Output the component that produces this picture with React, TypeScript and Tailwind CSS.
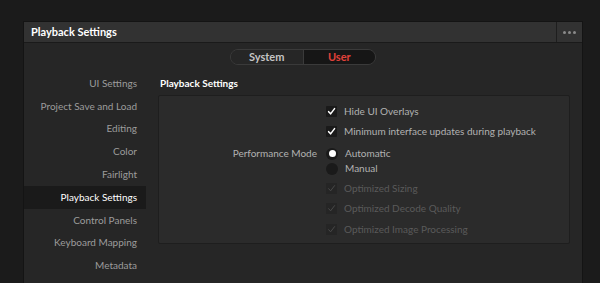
import React from "react";

const navItems = [
  "UI Settings",
  "Project Save and Load",
  "Editing",
  "Color",
  "Fairlight",
  "Playback Settings",
  "Control Panels",
  "Keyboard Mapping",
  "Metadata",
];

function CheckBox({ dim = false }: { dim?: boolean }) {
  return (
    <span
      className={
        dim
          ? "flex size-[11px] shrink-0 items-center justify-center rounded-[1px] bg-[#252525]"
          : "flex size-[11px] shrink-0 items-center justify-center rounded-[1px] bg-[#1a1a1a]"
      }
    >
      <svg viewBox="0 0 10 10" className="size-[9px]" aria-hidden>
        <path
          d="M1.8 5.2 L4 7.6 L8.4 1.8"
          fill="none"
          stroke={dim ? "#4a4a4a" : "#ffffff"}
          strokeWidth={dim ? 1.1 : 1.7}
          strokeLinecap="round"
          strokeLinejoin="round"
        />
      </svg>
    </span>
  );
}

function Radio({ on = false }: { on?: boolean }) {
  return (
    <span className="flex size-[12px] shrink-0 items-center justify-center rounded-full bg-[#1a1a1a]">
      {on ? <span className="size-[7px] rounded-full bg-white" /> : null}
    </span>
  );
}

export default function App() {
  return (
    <div
      className="h-[283px] w-[600px] overflow-hidden bg-[#1b1b1b] pl-[23px] pt-[21px] text-[10px]"
      style={{ fontFamily: 'Lato, "Open Sans", sans-serif' }}
    >
      <div className="h-[280px] w-[560px] border border-[#141414] bg-[#262626]">
        {/* header */}
        <div className="flex h-[21px] border-b border-[#1a1a1a] bg-[#323232]">
          <div className="flex flex-1 items-center pl-[7px] text-[11px] font-bold text-white">Playback Settings</div>
          <div className="flex w-[26px] items-center justify-center gap-[2px] border-l border-[#1e1e1e]">
            <span className="size-[3px] rounded-full bg-[#8a8a8a]" />
            <span className="size-[3px] rounded-full bg-[#8a8a8a]" />
            <span className="size-[3px] rounded-full bg-[#8a8a8a]" />
          </div>
        </div>

        {/* tabs */}
        <div className="flex justify-center pt-[6px]">
          <div className="flex h-[16px] w-[146px] overflow-hidden rounded-full border border-[#3a3a3a] text-[11px]">
            <div className="flex flex-1 items-center justify-center border-r border-[#3a3a3a] bg-[#262626] font-bold text-[#c4c4c4]">
              System
            </div>
            <div className="flex flex-1 items-center justify-center bg-[#161616] font-bold text-[#e0413a]">User</div>
          </div>
        </div>

        <div className="mt-[7px] flex">
          {/* sidebar */}
          <nav className="flex w-[123px] flex-col">
            {navItems.map((item) => (
              <div
                key={item}
                className={
                  item === "Playback Settings"
                    ? "flex h-[22.8px] items-center justify-end bg-[#1a1a1a] pr-[9px] text-white"
                    : "flex h-[22.8px] items-center justify-end pr-[9px] text-[#9c9c9c]"
                }
              >
                {item}
              </div>
            ))}
          </nav>

          {/* content */}
          <div className="ml-[12px] flex-1 pr-[12px]">
            <div className="flex h-[23px] items-center pl-[2px] font-bold text-white">Playback Settings</div>
            <div className="h-[149px] w-[412px] rounded-[2px] border border-[#1e1e1e] bg-[#2b2b2b] pt-[5px]">
              <div className="grid grid-cols-[158px_1fr] gap-x-[9px] text-[#b2b2b2]">
                <div />
                <div className="flex h-[20px] items-center gap-[7px]">
                  <CheckBox />
                  <span>Hide UI Overlays</span>
                </div>
                <div />
                <div className="flex h-[20px] items-center gap-[7px]">
                  <CheckBox />
                  <span>Minimum interface updates during playback</span>
                </div>
                <div className="mt-[5px] flex h-[15px] items-center justify-end">Performance Mode</div>
                <div className="mt-[5px] flex h-[15px] items-center gap-[7px]">
                  <Radio on />
                  <span>Automatic</span>
                </div>
                <div />
                <div className="flex h-[15px] items-center gap-[7px]">
                  <Radio />
                  <span>Manual</span>
                </div>
                <div />
                <div className="mt-[2px] flex h-[20px] items-center gap-[7px] text-[#5a5a5a]">
                  <CheckBox dim />
                  <span>Optimized Sizing</span>
                </div>
                <div />
                <div className="flex h-[21px] items-center gap-[7px] text-[#5a5a5a]">
                  <CheckBox dim />
                  <span>Optimized Decode Quality</span>
                </div>
                <div />
                <div className="flex h-[20px] items-center gap-[7px] text-[#5a5a5a]">
                  <CheckBox dim />
                  <span>Optimized Image Processing</span>
                </div>
              </div>
            </div>
          </div>
        </div>
      </div>
    </div>
  );
}
